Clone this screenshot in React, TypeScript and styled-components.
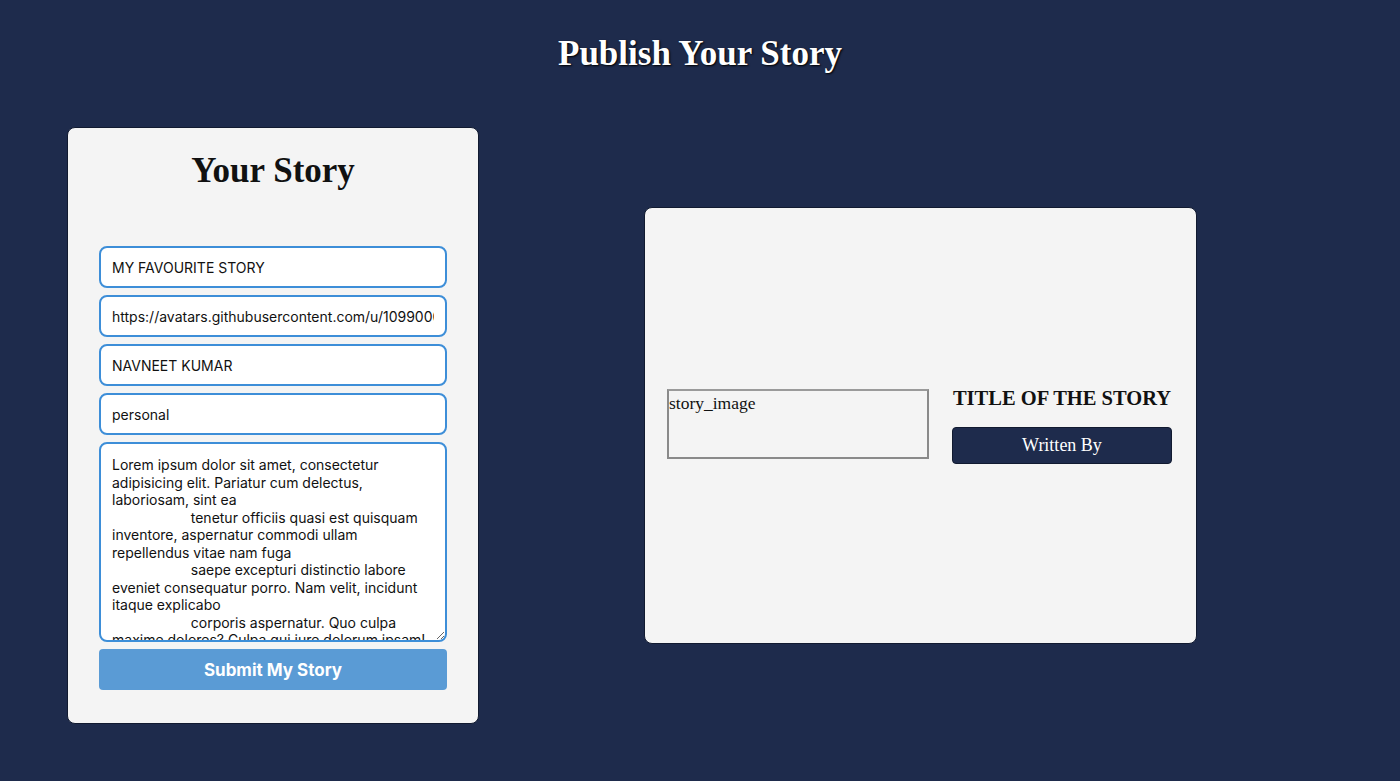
import React, { FC, useState } from 'react';
import styled, { createGlobalStyle } from 'styled-components';

const GlobalStyle = createGlobalStyle`
  html, body {
    margin: 0;
    padding: 0;
    background-color: #1e2b4c;
  }
  #root {
    min-height: 781px;
  }
`;

const Page = styled.div`
  min-height: 781px;
  background-color: #1e2b4c;
  font-family: "Liberation Serif", "Times New Roman", serif;
`;

const PageTitle = styled.h1`
  margin: 0;
  padding-top: 33px;
  text-align: center;
  color: #fff;
  font-size: 35px;
  font-weight: bold;
  line-height: 42px;
  text-shadow: 1px 1px 2px #000;
`;

const Main = styled.div`
  display: flex;
  align-items: center;
  gap: 165px;
  padding: 0 0 0 67px;
  margin-top: 52px;
`;

const Card = styled.div`
  box-sizing: border-box;
  background-color: #f4f4f4;
  border: 1px solid #111a30;
  border-radius: 8px;
`;

const FormCard = styled(Card)`
  width: 412px;
  height: 597px;
  padding: 0 31px;
  display: flex;
  flex-direction: column;
`;

const FormTitle = styled.h2`
  margin: 22px 0 0;
  text-align: center;
  font-size: 35px;
  line-height: 42px;
  color: #111;
`;

const Form = styled.form`
  display: flex;
  flex-direction: column;
  gap: 7px;
  margin-top: 54px;
`;

const fieldCss = `
  box-sizing: border-box;
  width: 100%;
  border: 2px solid #3d8ed8;
  border-radius: 8px;
  background: #fff;
  color: #111;
  font-family: "Inter", "Liberation Sans", sans-serif;
  font-size: 14px;
  padding: 0 11px;
  outline: none;
`;

const Field = styled.input`
  ${fieldCss}
  height: 42px;
`;

const StoryText = styled.textarea`
  ${fieldCss}
  height: 200px;
  padding: 12px 11px 0;
  line-height: 17.5px;
  resize: vertical;
  overflow: hidden;
`;

const SubmitButton = styled.button`
  height: 41px;
  border: none;
  border-radius: 4px;
  background-color: #5a9bd5;
  color: #fff;
  font-family: "Inter", "Liberation Sans", sans-serif;
  font-size: 17px;
  font-weight: bold;
  cursor: pointer;
`;

const PreviewCard = styled(Card)`
  width: 553px;
  height: 437px;
  padding: 0 24px 0 22px;
  display: flex;
  align-items: center;
  gap: 23px;
`;

const ImageBox = styled.div`
  box-sizing: border-box;
  width: 262px;
  height: 70px;
  margin-bottom: 4px;
  border: 2px solid #8a8a8a;
  border-top-color: #9a9a9a;
  color: #111;
  font-size: 17.5px;
  line-height: 24px;
`;

const PreviewText = styled.div`
  flex: 1;
  display: flex;
  flex-direction: column;
  align-items: stretch;
  gap: 18px;
`;

const StoryTitle = styled.h3`
  margin: 0;
  text-align: center;
  white-space: nowrap;
  font-size: 20.5px;
  line-height: 22px;
  color: #111;
`;

const AuthorButton = styled.button`
  height: 37px;
  border: 1px solid #111a30;
  border-radius: 4px;
  background-color: #1e2b4c;
  color: #fff;
  font-family: "Liberation Serif", "Times New Roman", serif;
  font-size: 18px;
`;

const loremText = `Lorem ipsum dolor sit amet, consectetur adipisicing elit. Pariatur cum delectus, laboriosam, sint ea
                    tenetur officiis quasi est quisquam inventore, aspernatur commodi ullam repellendus vitae nam fuga
                    saepe excepturi distinctio labore eveniet consequatur porro. Nam velit, incidunt itaque explicabo
                    corporis aspernatur. Quo culpa maxime dolores? Culpa qui iure dolorum ipsam!`;

const App: FC = () => {
  const [title, setTitle] = useState('MY FAVOURITE STORY');
  const [image, setImage] = useState('https://avatars.githubusercontent.com/u/109900000');
  const [author, setAuthor] = useState('NAVNEET KUMAR');
  const [tag, setTag] = useState('personal');
  const [story, setStory] = useState(loremText);

  return (
    <Page>
      <GlobalStyle />
      <PageTitle>Publish Your Story</PageTitle>
      <Main>
        <FormCard>
          <FormTitle>Your Story</FormTitle>
          <Form onSubmit={(e) => e.preventDefault()}>
            <Field value={title} onChange={(e) => setTitle(e.target.value)} />
            <Field value={image} onChange={(e) => setImage(e.target.value)} />
            <Field value={author} onChange={(e) => setAuthor(e.target.value)} />
            <Field value={tag} autoFocus onChange={(e) => setTag(e.target.value)} />
            <StoryText value={story} onChange={(e) => setStory(e.target.value)} />
            <SubmitButton type="submit">Submit My Story</SubmitButton>
          </Form>
        </FormCard>
        <PreviewCard>
          <ImageBox>story_image</ImageBox>
          <PreviewText>
            <StoryTitle>TITLE OF THE STORY</StoryTitle>
            <AuthorButton>Written By</AuthorButton>
          </PreviewText>
        </PreviewCard>
      </Main>
    </Page>
  );
};

export default App;
